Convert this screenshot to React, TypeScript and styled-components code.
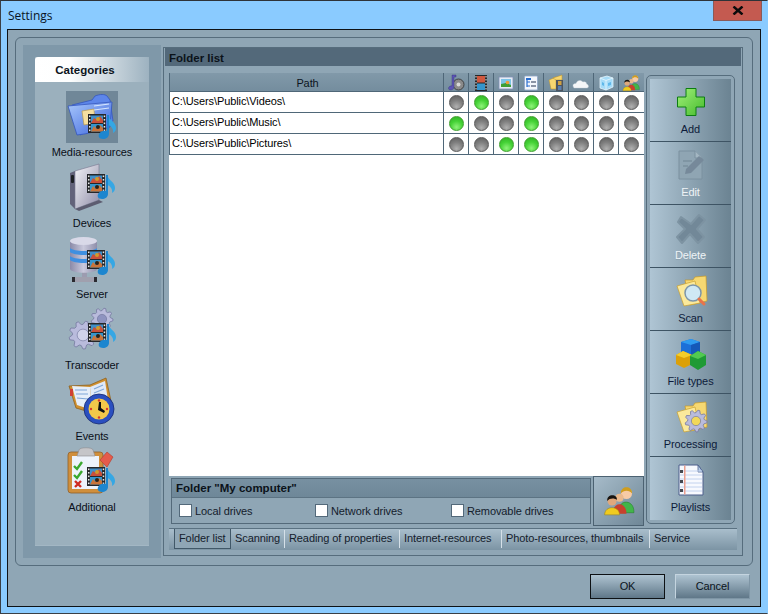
import React from "react";
import styled, { createGlobalStyle } from "styled-components";

const Global = createGlobalStyle`
  html, body { margin: 0; padding: 0; background: #8acbff; }
  body { font-family: "Liberation Sans", Arial, sans-serif; font-size: 11px; letter-spacing: -0.1px; color: #0c1420; }
  * { box-sizing: border-box; }
`;

const Window = styled.div`
  width: 768px; height: 614px; display: flex; flex-direction: column; overflow: hidden;
  background: #8acbff; border: 1px solid #3a3f45; border-top-color: #2e3338;
  border-right-color: #8acbff; padding: 0 6px 6px 6px;
`;
const TitleBar = styled.div`
  height: 28px; flex: none; display: flex; align-items: flex-start; justify-content: space-between;
`;
const Title = styled.div`
  font-family: "Open Sans", sans-serif; font-size: 12px; line-height: 29px; padding-left: 1px; color: #0a1526; letter-spacing: 0;
`;
const CloseButton = styled.div`
  width: 49px; height: 20px; margin-right: -1px; background: #c45a50; border: 1px solid #8a5a58; border-top: none;
  display: flex; align-items: center; justify-content: center;
`;
const Client = styled.div`
  width: 754px; height: 578px; flex: none; background: #8fa6b5; border: 1px solid #0e1216; padding: 7px 0 0 7px;
  display: flex; flex-direction: column;
`;
const OuterFrame = styled.div`
  width: 738px; height: 529px; flex: none; border: 1px solid #566d7d; border-radius: 6px; padding: 7px 9px 7px 7px;
  display: flex; gap: 2px;
`;
const LeftColumn = styled.div`
  width: 138px; background: #7f98a9; padding: 12px; display: flex;
`;
const CategoryPanel = styled.div`
  width: 114px; background: #9bb0bd; display: flex; flex-direction: column; border-bottom: 1px solid #a3b7c4;
`;
const CategoryHeader = styled.div`
  height: 25px; flex: none; margin-bottom: 9px; border-radius: 3px 3px 0 0;
  background: linear-gradient(90deg, #ffffff 0%, #fdfefe 30%, #9db2c0 100%);
  font-weight: 700; font-size: 11.5px; letter-spacing: 0; line-height: 27px; text-align: center; padding-right: 14px; color: #0c1420;
`;
const Category = styled.div`
  height: 71px; display: flex; flex-direction: column; align-items: center; flex: none;
`;
const CategoryIcon = styled.div<{ $selected?: boolean }>`
  width: 52px; height: 52px; flex: none; background: ${(p) => (p.$selected ? "#708798" : "transparent")};
  svg { display: block; }
`;
const CategoryLabel = styled.div`
  line-height: 18px; height: 19px; color: #0a0f18; font-size: 11px;
`;
const RightFrame = styled.div`
  width: 580px; height: 509px; margin-top: 2px; border: 1px solid #566d7d; display: flex; flex-direction: column;
`;
const FrameHeader = styled.div`
  height: 18px; flex: none; margin: 0 1px 7px 1px; background: #53697a; font-weight: 700; font-size: 11.5px; letter-spacing: 0;
  line-height: 20px; padding-left: 4px; color: #0b1219;
`;
const FrameBody = styled.div`
  flex: 1; padding: 0 5px; display: flex; flex-direction: column;
`;
const TopRow = styled.div`
  display: flex; height: 453px; flex: none;
`;
const MainColumn = styled.div`
  width: 475px; display: flex; flex-direction: column;
`;
const TableArea = styled.div`
  height: 403px; flex: none; background: #fff; display: flex; flex-direction: column;
`;
const TableRow = styled.div<{ $head?: boolean }>`
  display: grid; grid-template-columns: 274px repeat(8, 25px); height: ${(p) => (p.$head ? "19px" : "21px")};
  flex: none; border-bottom: 1px solid #4f6778;
  background: ${(p) => (p.$head ? "linear-gradient(#8199a9, #748d9e)" : "#fff")};
`;
const PathCell = styled.div<{ $head?: boolean }>`
  border-left: 1px solid #4f6778; padding-left: 2px; line-height: ${(p) => (p.$head ? "20px" : "18px")};
  text-align: ${(p) => (p.$head ? "center" : "left")};
  color: ${(p) => (p.$head ? "#0c1420" : "#000")};
`;
const FlagCell = styled.div`
  border-left: 1px solid #4f6778; display: flex; align-items: center; justify-content: center; overflow: hidden;
`;
const Led = styled.span<{ $on?: boolean }>`
  width: 15px; height: 15px; border-radius: 50%; display: block;
  border: 1px solid ${(p) => (p.$on ? "#3fa02e" : "#5a5a5a")};
  background: ${(p) =>
    p.$on
      ? "radial-gradient(circle at 50% 78%, #8ef27a 0%, #45d236 50%, #2fae25 100%)"
      : "radial-gradient(circle at 50% 82%, #b0b0b0 0%, #808080 50%, #5c5c5c 100%)"};
`;
const BottomRow = styled.div`
  height: 50px; flex: none; display: flex; gap: 2px; padding-left: 2px;
`;
const DriveGroup = styled.div`
  width: 421px; height: 46px; margin-top: 2px; border: 1px solid #546a7a; display: flex; flex-direction: column;
`;
const DriveHeader = styled.div`
  height: 19px; flex: none; background: linear-gradient(#7790a1, #6e8798); border-bottom: 1px solid #5c7383;
  font-weight: 700; font-size: 11.5px; letter-spacing: 0; line-height: 19px; padding-left: 4px; color: #0b1219;
`;
const DriveBody = styled.div`
  flex: 1; display: grid; grid-template-columns: 136px 136px 1fr; padding: 0 0 0 7px; align-items: center;
`;
const Check = styled.label`
  display: flex; align-items: center; gap: 3px; color: #14202c;
`;
const CheckBox = styled.span`
  width: 13px; height: 13px; background: #fff; border: 1px solid #53697a; display: block;
`;
const PeopleButton = styled.div`
  width: 51px; height: 50px; border: 1px solid #4c6272; background: linear-gradient(135deg, #a6bbc9, #6f8797);
  display: flex; align-items: center; justify-content: center;
`;
const Toolbar = styled.div`
  width: 89px; height: 449px; margin: 2px 0 0 2px; border: 1px solid #566d7d; border-radius: 5px; padding: 3px;
`;
const ToolbarInner = styled.div`
  height: 441px; background: linear-gradient(90deg, #afc5d4, #6b8392); display: flex; flex-direction: column;
`;
const ToolButton = styled.div<{ $disabled?: boolean; $last?: boolean }>`
  height: 63px; flex: none; padding-top: 5px; display: flex; flex-direction: column; align-items: center; gap: 2px;
  border-bottom: ${(p) => (p.$last ? "none" : "1px solid #3e5464")};
  color: ${(p) => (p.$disabled ? "#eef3f6" : "#0d1b3a")};
  text-shadow: ${(p) => (p.$disabled ? "0 1px 0 #8da3b1" : "none")};
  line-height: 14px;
  svg { display: block; }
`;
const TabBar = styled.div`
  width: 568px; height: 22px; margin-top: 2px; flex: none; display: flex; padding-left: 5px;
  border-top: 1px solid #5a7181; background: linear-gradient(#a9becc, #7c94a4);
`;
const Tab = styled.div<{ $w: number; $active?: boolean; $last?: boolean }>`
  width: ${(p) => p.$w}px; height: ${(p) => (p.$active ? "20px" : "18px")}; flex: none; white-space: nowrap;
  margin-top: ${(p) => (p.$active ? "0" : "1px")};
  padding-left: 4px; line-height: ${(p) => (p.$active ? "18px" : "16px")}; color: #14202c;
  background: ${(p) => (p.$active ? "#8fa6b5" : "transparent")};
  border: ${(p) => (p.$active ? "1px solid #415868" : "none")};
  border-top: none;
  border-right: ${(p) => (p.$last ? "none" : p.$active ? "1px solid #415868" : "1px solid #d5e0e8")};
`;
const Footer = styled.div`
  flex: 1; display: flex; justify-content: flex-end; gap: 10px; padding: 8px 10px 0 0;
`;
const DialogButton = styled.div<{ $default?: boolean }>`
  width: 75px; height: 25px; text-align: center; line-height: 23px; color: #0c1420;
  background: linear-gradient(#aec3d1, #5f7788);
  border: 1px solid ${(p) => (p.$default ? "#0d1114" : "#7e95a5")};
  border-top-color: ${(p) => (p.$default ? "#0d1114" : "#c4d4df")};
  border-left-color: ${(p) => (p.$default ? "#0d1114" : "#c4d4df")};
`;

/* ---------- drawings ---------- */
const MediaBadge = ({ x = 0, y = 0 }: { x?: number; y?: number }) => (
  <g transform={`translate(${x} ${y})`}>
    <rect x="22" y="23" width="18" height="19" fill="#25272a" />
    <rect x="25" y="24.500" width="12" height="7.500" fill="#3f8fc9" />
    <rect x="25" y="33" width="12" height="7.500" fill="#3595cc" />
    <path d="M25 32 L28 27 L31 29 L34 25 L37 29 L37 32 Z" fill="#c8503a" />
    <path d="M25 40.500 L28 35 L31 38 L34 34 L37 37 L37 40.500 Z" fill="#c9743a" />
    <circle cx="32" cy="28" r="2" fill="#d09a2a" />
    <circle cx="32" cy="36" r="2" fill="#2b2116" />
    {[24.500, 28, 31.500, 35, 38.500].map((v) => (
      <g key={v}>
        <rect x="23" y={v} width="1.500" height="1.600" fill="#e8e8e8" />
        <rect x="37.700" y={v} width="1.500" height="1.600" fill="#e8e8e8" />
      </g>
    ))}
    <path d="M42 24 C44 30 50 31 50 37 C50 39 49 41 47 42 C48 38 45 35 42.500 34 Z" fill="#35a7e4" />
    <path d="M41 24 L43 24 L43 43 C43 47 38 49 34.500 47.500 C31 45.500 33 41 37 40 C39 39.500 40 39.700 41 40 Z" fill="#1d86cf" />
  </g>
);

const gearPoints = (cx: number, cy: number, r: number, teeth: number) => {
  const pts: string[] = [];
  const n = teeth * 4;
  for (let i = 0; i < n; i++) {
    const a = (i / n) * Math.PI * 2;
    const rad = i % 4 < 2 ? r : r * 0.76;
    pts.push(`${(cx + Math.cos(a) * rad).toFixed(1)},${(cy + Math.sin(a) * rad).toFixed(1)}`);
  }
  return pts.join(" ");
};

const Gear = ({ cx, cy, r, hub = "#8e93c0", teeth = 9 }: { cx: number; cy: number; r: number; hub?: string; teeth?: number }) => (
  <g>
    <polygon points={gearPoints(cx, cy, r, teeth)} fill="#b9bbdc" stroke="#75799f" strokeWidth="0.800" />
    <circle cx={cx} cy={cy} r={r * 0.42} fill={hub} stroke="#6c7098" strokeWidth="0.600" />
  </g>
);

const Icon52 = ({ children }: { children: React.ReactNode }) => (
  <svg width="52" height="52" viewBox="0 0 52 52">{children}</svg>
);

const FolderIcon = () => (
  <Icon52>
    <defs>
      <linearGradient id="fblue" x1="0" y1="0" x2="1" y2="1">
        <stop offset="0" stopColor="#a9c8fb" />
        <stop offset="1" stopColor="#3a63dc" />
      </linearGradient>
    </defs>
    <path d="M6 14 L26 9 L29 5 C34 3 39 3 41 5 L44 9 L47 30 L14 44 Z" fill="#5d86ea" stroke="#3557bd" strokeWidth="0.800" />
    <path d="M2 15 L46 11 L44 36 C32 40 22 43 11 44 Z" fill="url(#fblue)" stroke="#3557bd" strokeWidth="0.800" />
    <path d="M16 20 L28 18 L29 32 L18 34 Z" fill="#f5dfa0" stroke="#b99a4a" strokeWidth="0.700" />
    <path d="M28 15 L43 13 M28 19 L43 17" stroke="#d7e6fd" strokeWidth="1.200" />
    <MediaBadge />
  </Icon52>
);

const DeviceIcon = () => (
  <Icon52>
    <defs>
      <linearGradient id="dsil" x1="0" y1="0" x2="1" y2="1">
        <stop offset="0" stopColor="#f4f4f8" />
        <stop offset="1" stopColor="#8f8da8" />
      </linearGradient>
    </defs>
    <path d="M4 11 L9 9 L9 47 L4 42 Z" fill="#62627a" />
    <path d="M9 9 L33 2 L33 38 L9 47 Z" fill="url(#dsil)" stroke="#77768f" strokeWidth="0.600" />
    <path d="M9 47 L33 38 L37 40 L13 49 Z" fill="#5c5c70" />
    <rect x="5" y="13" width="3" height="8" rx="1" fill="#1d2024" />
    <MediaBadge x={-1} y={-11} />
  </Icon52>
);

const ServerIcon = () => (
  <Icon52>
    <defs>
      <linearGradient id="srv" x1="0" y1="0" x2="1" y2="0">
        <stop offset="0" stopColor="#8b8aa8" />
        <stop offset="0.500" stopColor="#c9c9dc" />
        <stop offset="1" stopColor="#8f8eaa" />
      </linearGradient>
    </defs>
    <rect x="16" y="36" width="5" height="9" fill="#9c9cb0" />
    <rect x="6" y="44" width="25" height="5" rx="1" fill="#a0a0ae" />
    <rect x="6" y="44" width="3" height="5" fill="#2a2a30" />
    <rect x="28" y="44" width="3" height="5" fill="#2a2a30" />
    <path d="M4 9 C4 5 30 5 31 8 L31 36 C30 41 6 41 4 36 Z" fill="url(#srv)" />
    <ellipse cx="17.500" cy="8" rx="13.500" ry="4" fill="#d9d9e8" />
    <path d="M4 15 C8 19 27 19 31 15 L31 19 C27 23 8 23 4 19 Z" fill="#3f8fe0" />
    <path d="M4 23 C8 27 27 27 31 23 L31 27 C27 31 8 31 4 27 Z" fill="#3f8fe0" />
    <MediaBadge x={-1} y={-6} />
  </Icon52>
);

const TranscoderIcon = () => (
  <Icon52>
    <Gear cx={36} cy={15} r={11} />
    <Gear cx={17} cy={31} r={14} hub="#d0d2ea" />
    <MediaBadge y={-4} />
  </Icon52>
);

const EventsIcon = () => (
  <Icon52>
    <path d="M3 11 L24 10 L40 3 L45 26 L27 38 L10 33 Z" fill="#cf8f2e" stroke="#8f6220" strokeWidth="0.800" />
    <path d="M6 11 L24 12 L26 35 L11 30 Z" fill="#e6eefa" />
    <path d="M24 12 L39 6 L42 25 L26 35 Z" fill="#dfe9f8" />
    <path d="M9 15 L21 15 M10 19 L22 19 M11 23 L22 24 M28 14 L37 10 M28 18 L38 14" stroke="#7ea6d8" strokeWidth="1.100" />
    <rect x="4" y="14" width="3" height="7" fill="#cf4036" />
    <circle cx="33" cy="34" r="15" fill="#2a4fc0" stroke="#15286f" strokeWidth="0.800" />
    <circle cx="33" cy="34" r="10.500" fill="#f2c84a" />
    <path d="M33 27 L32 35 L38 38 L39 36 L35 33 L35 27 Z" fill="#111" />
    {[[33, 25.500], [41, 34], [33, 42.500], [25, 34]].map(([a, b]) => (
      <circle key={a * 100 + b} cx={a} cy={b} r="1.200" fill="#d8392e" />
    ))}
  </Icon52>
);

const AdditionalIcon = () => (
  <Icon52>
    <rect x="2" y="6" width="35" height="41" rx="3" fill="#d08f3c" stroke="#90602a" strokeWidth="0.800" />
    <path d="M6 10 L33 10 L33 43 L6 43 Z" fill="#edf3fb" />
    <path d="M13 4 C13 1 27 1 27 4 L29 10 L11 10 Z" fill="#c5c5c8" stroke="#8a8a8f" strokeWidth="0.600" />
    <path d="M8 20 L11 23 L16 16" stroke="#3aa82f" strokeWidth="2.400" fill="none" />
    <path d="M8 29 L11 32 L16 25" stroke="#3aa82f" strokeWidth="2.400" fill="none" />
    <path d="M9 35 L15 41 M15 35 L9 41" stroke="#cf2b22" strokeWidth="2.400" />
    <path d="M34 14 L41 6 L47 11 L41 21 Z" fill="#e55b4b" stroke="#b23a2e" strokeWidth="0.600" />
    <MediaBadge x={-1} y={-2} />
  </Icon52>
);

const Tool36 = ({ children }: { children: React.ReactNode }) => (
  <svg width="36" height="36" viewBox="0 0 36 36">{children}</svg>
);

const PlusIcon = () => (
  <Tool36>
    <defs>
      <linearGradient id="gplus" x1="0" y1="0" x2="1" y2="1">
        <stop offset="0" stopColor="#a2f07a" />
        <stop offset="1" stopColor="#45bb2c" />
      </linearGradient>
    </defs>
    <polygon
      points="13,4.500 23,4.500 23,13 31.500,13 31.500,23 23,23 23,31.500 13,31.500 13,23 4.500,23 4.500,13 13,13"
      fill="url(#gplus)" stroke="#0d7d12" strokeWidth="1"
    />
  </Tool36>
);

const EditIcon = () => (
  <Tool36>
    <path d="M6 4 L22 4 L29 11 L29 32 L6 32 Z" fill="#8fa5b3" stroke="#7b909f" strokeWidth="1" />
    <path d="M22 4 L22 11 L29 11" fill="#a3b6c2" stroke="#7b909f" strokeWidth="1" />
    <path d="M12 27 L13 22 L26 9 L31 13 L18 26 Z" fill="#76899a" />
    <path d="M10 14 L19 14 M10 19 L15 19" stroke="#7b909f" strokeWidth="1.500" />
  </Tool36>
);

const DeleteIcon = () => (
  <Tool36>
    <path d="M8 7 L18 14 L26 5 L32 10 L24 19 L31 27 L25 33 L17 24 L9 33 L4 27 L12 19 L5 12 Z" fill="#728898" stroke="#7d93a2" strokeWidth="2" strokeLinejoin="round" />
  </Tool36>
);

const ScanIcon = () => (
  <Tool36>
    <path d="M12 7 L20 7 L22 4 L33 3 L34 28 L17 32 Z" fill="#f6d872" stroke="#c79a28" strokeWidth="0.700" />
    <path d="M4 13 L22 8 L27 30 L11 33 Z" fill="#fbe99b" stroke="#c99f2e" strokeWidth="0.700" />
    <circle cx="20" cy="20" r="8" fill="#cfe8f4" stroke="#7d95a8" strokeWidth="1.500" />
    <path d="M26 26 L31 31" stroke="#e8734a" strokeWidth="3" strokeLinecap="round" />
  </Tool36>
);

const CubesIcon = () => (
  <Tool36>
    <path d="M8 6 L18 3 L27 6 L27 17 L18 21 L8 17 Z" fill="#1c6fd8" />
    <path d="M8 6 L18 3 L27 6 L18 9 Z" fill="#2f9bf0" />
    <path d="M18 9 L27 6 L27 17 L18 21 Z" fill="#1558b8" />
    <path d="M3 19 L10 15 L19 19 L19 28 L11 32 L3 28 Z" fill="#dca008" />
    <path d="M3 19 L10 15 L19 19 L11 22 Z" fill="#f5cd2a" />
    <path d="M17 20 L25 15 L33 19 L33 29 L25 34 L17 29 Z" fill="#1f9a34" />
    <path d="M17 20 L25 15 L33 19 L25 23 Z" fill="#52c950" />
  </Tool36>
);

const ProcessIcon = () => (
  <Tool36>
    <path d="M12 7 L20 7 L22 4 L33 3 L34 28 L17 32 Z" fill="#f6d872" stroke="#c79a28" strokeWidth="0.700" />
    <path d="M4 13 L22 8 L27 30 L11 33 Z" fill="#fbe99b" stroke="#c99f2e" strokeWidth="0.700" />
    <Gear cx={23} cy={22} r={11} hub="#f2d85a" />
  </Tool36>
);

const PlaylistIcon = () => (
  <Tool36>
    <path d="M6 3 L25 3 L30 10 L30 33 L6 33 Z" fill="#f7f9fe" stroke="#4d5f8c" strokeWidth="1" />
    <path d="M25 3 L25 10 L30 10 Z" fill="#b5cbe8" stroke="#4d5f8c" strokeWidth="0.800" />
    {[9, 13, 17, 21, 25, 29].map((y) => (
      <path key={y} d={`M7 ${y} L29 ${y}`} stroke="#c2d2ee" strokeWidth="1" />
    ))}
    <rect x="11" y="3.500" width="1.500" height="29" fill="#eba090" />
    {[9, 19, 28].map((y) => (
      <rect key={y} x="7" y={y - 1} width="3" height="3" fill="#45484f" />
    ))}
  </Tool36>
);

const PeopleShapes = () => (
  <g>
    <path d="M15 24 C14 12 29 12 29 24 L29 25 L15 25 Z" fill="#42b54a" stroke="#237a2c" strokeWidth="0.500" />
    <circle cx="22" cy="7" r="5.200" fill="#f7cba6" />
    <path d="M16.800 7 C16 -1 28 -1 27.200 7 C25 3.500 19 3.500 16.800 7 Z" fill="#cf9d1e" />
    <circle cx="15.500" cy="11" r="3.800" fill="#eab98c" />
    <path d="M9 26 C9 14 22 14 22 26 Z" fill="#c8412d" />
    <circle cx="8.500" cy="14" r="4.300" fill="#e0a87c" />
    <path d="M4 14 C3 7 14 7 13 13 C11 11 6 11 4 14 Z" fill="#17130f" />
    <path d="M1.500 27 C1.500 18 15.500 18 15.500 27 Z" fill="#f0cb1e" stroke="#9d8210" strokeWidth="0.500" />
  </g>
);

const PeopleLarge = () => (
  <svg width="32" height="30" viewBox="0 0 30 28"><PeopleShapes /></svg>
);

const Small = ({ children }: { children: React.ReactNode }) => (
  <svg width="18" height="18" viewBox="0 0 18 18">{children}</svg>
);

const ColumnIcons: React.ReactNode[] = [
  <Small key="a">
    <circle cx="11.500" cy="10.500" r="5.500" fill="#8a8a8a" stroke="#2f2f2f" strokeWidth="0.800" />
    <circle cx="11.500" cy="10.500" r="2" fill="#d8d8d8" />
    <path d="M5 1 L9 1 L9 3 L7 3 L7 13 C7 16 2 17 1.500 14.500 C1.300 12.500 4 11.500 5 12 Z" fill="#5c55b5" stroke="#363079" strokeWidth="0.400" />
  </Small>,
  <Small key="b">
    <rect x="3" y="1" width="12" height="16" fill="#26282b" />
    <rect x="5" y="2" width="8" height="6.500" fill="#d0583f" />
    <rect x="5" y="9.500" width="8" height="6.500" fill="#3595cc" />
    {[2, 5, 8, 11, 14].map((y) => (
      <g key={y}>
        <rect x="3.500" y={y} width="1" height="1.500" fill="#e8e8e8" />
        <rect x="13.500" y={y} width="1" height="1.500" fill="#e8e8e8" />
      </g>
    ))}
  </Small>,
  <Small key="c">
    <rect x="2" y="3" width="14" height="12" fill="#e6ecf6" stroke="#7f8fb5" strokeWidth="0.800" />
    <rect x="4" y="5" width="10" height="8" fill="#7cc3e8" />
    <path d="M4 13 L4 10 L9 9 L14 11 L14 13 Z" fill="#3f9e35" />
    <circle cx="10.500" cy="8.500" r="1.800" fill="#ef9b35" />
  </Small>,
  <Small key="d">
    <rect x="2.500" y="2" width="13" height="14" rx="1" fill="#f4f7fc" stroke="#8fa6c8" strokeWidth="0.800" />
    <path d="M5 4.500 L5 13 M5 8 L8 8 M5 12 L8 12" stroke="#2a6fd0" strokeWidth="1.200" fill="none" />
    <rect x="4" y="4" width="5" height="2" fill="#2a6fd0" />
    <rect x="9" y="7" width="5" height="2" fill="#8b94a5" />
    <rect x="9" y="11" width="5" height="2" fill="#8b94a5" />
  </Small>,
  <Small key="e">
    <path d="M2 6 L9 3 L9 15 L4 15 Z" fill="#f7d670" stroke="#b9902a" strokeWidth="0.500" />
    <path d="M6 4 L15 1 L15 6 L9 6 Z" fill="#f7d670" stroke="#b9902a" strokeWidth="0.500" />
    <rect x="9" y="6" width="7" height="11" fill="#4d5560" />
    <rect x="11" y="7" width="3.500" height="4" fill="#d0a040" />
    <rect x="11" y="12" width="3.500" height="4" fill="#5a7fb0" />
  </Small>,
  <Small key="f">
    <path d="M2 14 C-0.500 11 2 9 4 9.500 C5 6 9 5.500 11 8 C13 7 15 8.500 14.500 10 C17 10.500 17 14 15 14 Z" fill="#f4f6f8" stroke="#c0ccd6" strokeWidth="0.400" />
  </Small>,
  <Small key="g">
    <path d="M3 4 L10 2 L16 4 L16 13 L9 16 L3 14 Z" fill="#a6dcf8" stroke="#e4f5fe" strokeWidth="0.800" />
    <path d="M3 4 L9 6.500 L16 4 M9 6.500 L9 16" stroke="#e8f7ff" strokeWidth="0.800" fill="none" />
    <path d="M5 8 L7 9 L7 12 L5 11 Z M11 9 L14 8 L14 11 L11 12 Z" fill="#5fb8ea" />
  </Small>,
  <svg key="h" width="18" height="18" viewBox="0 0 30 28"><PeopleShapes /></svg>,
];

const flags: boolean[][] = [
  [false, true, false, true, false, false, false, false],
  [true, false, false, true, false, false, false, false],
  [false, false, true, true, false, false, false, false],
];
const paths = ["C:\\Users\\Public\\Videos\\", "C:\\Users\\Public\\Music\\", "C:\\Users\\Public\\Pictures\\"];

const categories = [
  { label: "Media-resources", icon: <FolderIcon />, selected: true },
  { label: "Devices", icon: <DeviceIcon /> },
  { label: "Server", icon: <ServerIcon /> },
  { label: "Transcoder", icon: <TranscoderIcon /> },
  { label: "Events", icon: <EventsIcon /> },
  { label: "Additional", icon: <AdditionalIcon /> },
];

const tools = [
  { label: "Add", icon: <PlusIcon /> },
  { label: "Edit", icon: <EditIcon />, disabled: true },
  { label: "Delete", icon: <DeleteIcon />, disabled: true },
  { label: "Scan", icon: <ScanIcon /> },
  { label: "File types", icon: <CubesIcon /> },
  { label: "Processing", icon: <ProcessIcon /> },
  { label: "Playlists", icon: <PlaylistIcon /> },
];

const tabs = [
  { label: "Folder list", w: 57, active: true },
  { label: "Scanning", w: 54 },
  { label: "Reading of properties", w: 115 },
  { label: "Internet-resources", w: 102 },
  { label: "Photo-resources, thumbnails", w: 148 },
  { label: "Service", w: 60, last: true },
];

export default function App() {
  return (
    <Window>
      <Global />
      <TitleBar>
        <Title>Settings</Title>
        <CloseButton>
          <svg width="12" height="9" viewBox="0 0 12 9">
            <path d="M1.500 0.500 L10.500 8.500 M10.500 0.500 L1.500 8.500" stroke="#0b0b0b" strokeWidth="2.400" />
          </svg>
        </CloseButton>
      </TitleBar>
      <Client>
        <OuterFrame>
          <LeftColumn>
            <CategoryPanel>
              <CategoryHeader>Categories</CategoryHeader>
              {categories.map((c) => (
                <Category key={c.label}>
                  <CategoryIcon $selected={c.selected}>{c.icon}</CategoryIcon>
                  <CategoryLabel>{c.label}</CategoryLabel>
                </Category>
              ))}
            </CategoryPanel>
          </LeftColumn>
          <RightFrame>
            <FrameHeader>Folder list</FrameHeader>
            <FrameBody>
              <TopRow>
                <MainColumn>
                  <TableArea>
                    <TableRow $head>
                      <PathCell $head>Path</PathCell>
                      {ColumnIcons.map((ic, i) => (
                        <FlagCell key={i}>{ic}</FlagCell>
                      ))}
                    </TableRow>
                    {paths.map((p, r) => (
                      <TableRow key={p}>
                        <PathCell>{p}</PathCell>
                        {flags[r].map((on, i) => (
                          <FlagCell key={i}>
                            <Led $on={on} />
                          </FlagCell>
                        ))}
                      </TableRow>
                    ))}
                  </TableArea>
                  <BottomRow>
                    <DriveGroup>
                      <DriveHeader>Folder "My computer"</DriveHeader>
                      <DriveBody>
                        <Check><CheckBox />Local drives</Check>
                        <Check><CheckBox />Network drives</Check>
                        <Check><CheckBox />Removable drives</Check>
                      </DriveBody>
                    </DriveGroup>
                    <PeopleButton><PeopleLarge /></PeopleButton>
                  </BottomRow>
                </MainColumn>
                <Toolbar>
                  <ToolbarInner>
                    {tools.map((t, i) => (
                      <ToolButton key={t.label} $disabled={t.disabled} $last={i === tools.length - 1}>
                        {t.icon}
                        <span>{t.label}</span>
                      </ToolButton>
                    ))}
                  </ToolbarInner>
                </Toolbar>
              </TopRow>
              <TabBar>
                {tabs.map((t) => (
                  <Tab key={t.label} $w={t.w} $active={t.active} $last={t.last}>{t.label}</Tab>
                ))}
              </TabBar>
            </FrameBody>
          </RightFrame>
        </OuterFrame>
        <Footer>
          <DialogButton $default>OK</DialogButton>
          <DialogButton>Cancel</DialogButton>
        </Footer>
      </Client>
    </Window>
  );
}
